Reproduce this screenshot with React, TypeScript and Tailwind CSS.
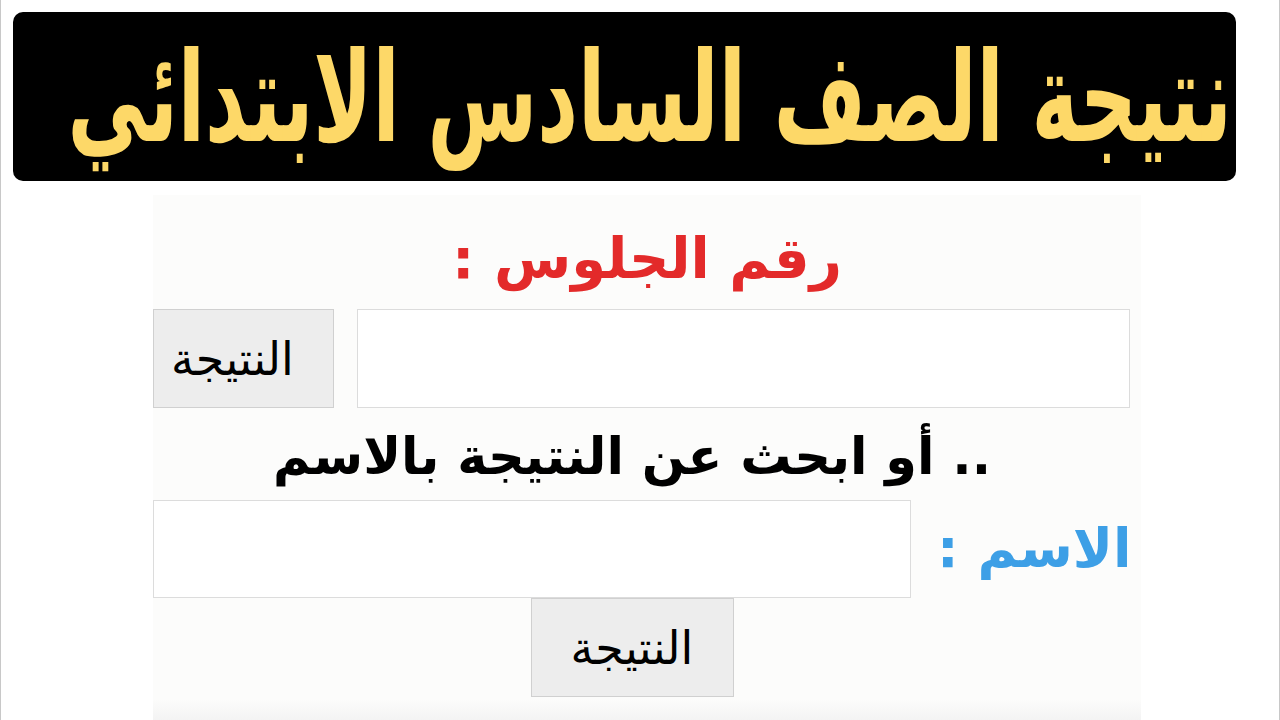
export default function App() {
  const arabic = { fontFamily: '"DejaVu Sans", sans-serif' };
  return (
    <div className="w-[1280px] h-[720px] bg-white overflow-hidden border-x border-[#c8c8c8]" style={arabic}>
      <div className="ml-[12px] mt-[12px] w-[1223px] h-[169px] rounded-[10px] bg-black flex items-center justify-end pr-[4px] overflow-hidden">
        <h1
          dir="rtl"
          className="shrink-0 text-[#fdd868] font-bold text-[112px] leading-none whitespace-nowrap scale-x-[0.71] scale-y-[1.12] origin-right"
        >
          نتيجة الصف السادس الابتدائي
        </h1>
      </div>

      <div className="ml-[152px] mt-[14px] w-[988px] h-[526px] bg-[#fcfcfb] flex flex-col">
        <div dir="rtl" className="shrink-0 h-[114px] pt-[14px] flex items-center justify-center text-[#e32a2a] font-bold text-[56px] leading-none">
          رقم الجلوس :
        </div>

        <div className="shrink-0 flex items-stretch h-[99px]">
          <button dir="rtl" className="w-[181px] pr-[22px] bg-[#ededed] border border-[#d0d0d0] text-black text-[46px] leading-none">
            النتيجة
          </button>
          <input className="ml-[23px] w-[773px] bg-white border border-[#dcdcdc]" />
        </div>

        <div dir="rtl" className="shrink-0 h-[92px] pt-[4px] flex items-center justify-center pr-[30px] text-black font-bold text-[51px] leading-none">
          .. أو ابحث عن النتيجة بالاسم
        </div>

        <div className="shrink-0 flex items-center h-[98px]">
          <input className="w-[758px] h-full bg-white border border-[#dcdcdc]" />
          <div dir="rtl" className="ml-[26px] text-[#3d9fe6] font-bold text-[54px] leading-none">
            الاسم :
          </div>
        </div>

        <div className="shrink-0 flex justify-center pr-[30px]">
          <button dir="rtl" className="w-[203px] h-[99px] bg-[#ededed] border border-[#d0d0d0] text-black text-[46px] leading-none">
            النتيجة
          </button>
        </div>

        <div className="mt-auto h-[22px] bg-gradient-to-b from-[#fcfcfb] to-[#f3f3f3]" />
      </div>
    </div>
  );
}
